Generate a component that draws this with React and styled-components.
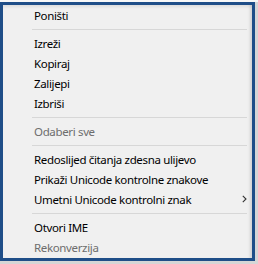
import React from 'react';
import styled, { createGlobalStyle } from 'styled-components';

const Global = createGlobalStyle`
  html, body { margin: 0; padding: 0; }
  body { width: 258px; height: 264px; overflow: hidden; background: #d8d8d8; }
`;

const Frame = styled.div`
  box-sizing: border-box;
  width: 258px;
  height: 264px;
  padding: 0 3px 3px 0;
  border-top: 2px solid #f7f7f7;
  background: #d6d6d6;
`;

const Highlight = styled.div`
  box-sizing: border-box;
  width: 255px;
  height: 259px;
  border: 3px solid #1f4e88;
  background: #f0f0f0;
`;

const Menu = styled.ul`
  list-style: none;
  margin: 0;
  padding: 0;
  height: 100%;
  box-sizing: border-box;
  display: flex;
  flex-direction: column;
  background: #f0f0f0;
  box-shadow: inset -4px 0 3px -2px rgba(0, 0, 0, 0.12), inset 0 4px 3px -2px rgba(0, 0, 0, 0.08);
  font-family: "Segoe UI", "Noto Sans", sans-serif;
  font-size: 11.5px;
  letter-spacing: -0.35px;
`;

const Item = styled.li`
  height: 20px;
  display: flex;
  align-items: center;
  padding: 0 5px 0 31px;
  color: ${(p) => (p.$disabled ? '#6d6d6d' : '#000')};
  white-space: nowrap;
`;

const Label = styled.span`
  flex: 1;
`;

const Separator = styled.li`
  height: 8px;
  display: flex;
  align-items: center;
  padding: 0 5px 0 29px;
  &::before {
    content: '';
    flex: 1;
    height: 1px;
    background: #d7d7d7;
  }
`;

const Chevron = () => (
  <svg width="5" height="8" viewBox="0 0 5 8" aria-hidden="true">
    <path d="M0.8 0.8 L4 4 L0.8 7.2" fill="none" stroke="#333" strokeWidth="1.1" />
  </svg>
);

const entries = [
  { label: 'Poništi' },
  { sep: true },
  { label: 'Izreži' },
  { label: 'Kopiraj' },
  { label: 'Zalijepi' },
  { label: 'Izbriši' },
  { sep: true },
  { label: 'Odaberi sve', disabled: true },
  { sep: true },
  { label: 'Redoslijed čitanja zdesna ulijevo' },
  { label: 'Prikaži Unicode kontrolne znakove' },
  { label: 'Umetni Unicode kontrolni znak', sub: true },
  { sep: true },
  { label: 'Otvori IME' },
  { label: 'Rekonverzija', disabled: true },
];

export default function App() {
  return (
    <>
      <Global />
      <Frame>
        <Highlight>
          <Menu>
            {entries.map((e, i) =>
              e.sep ? (
                <Separator key={i} />
              ) : (
                <Item key={i} $disabled={e.disabled}>
                  <Label>{e.label}</Label>
                  {e.sub && <Chevron />}
                </Item>
              )
            )}
          </Menu>
        </Highlight>
      </Frame>
    </>
  );
}
